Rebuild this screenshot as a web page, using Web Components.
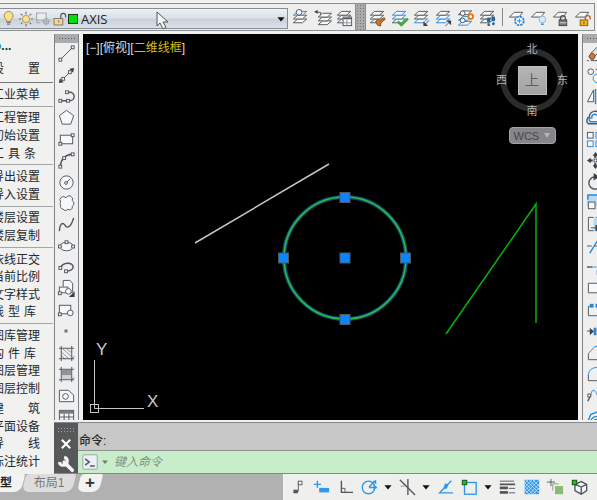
<!DOCTYPE html>
<html lang="zh-CN">
<head>
<meta charset="utf-8">
<title>CAD 工作区</title>
<style>
html, body { height: 100%; margin: 0; }
body { font: 12px/16px "Liberation Sans", "Noto Sans CJK SC", sans-serif; color: #26282b; overflow: hidden; }
</style>
</head>
<body>
<cad-app></cad-app>
<script>
const sq = (x, y, c = 'k') => `<rect class="${c} w" x="${x - 1.5}" y="${y - 1.5}" width="3" height="3"/>`;
const sheet = (y, c, x = 0) => `<path class="${c} w" d="M${2.5 + x} ${y + 4}l4.5-4h9.5l-4.5 4z"/>`;
const stack = (a, b, c) => sheet(10.5, c) + sheet(6.5, b) + sheet(2.5, a);
const lone = `<path class="k w" d="M1.5 8.500l5-5h9l-4 5z"/>`;

const ICONS = {
  // draw tools
  line: `<path class="k" d="M3 17L17 3"/>${sq(3.5, 16.500)}${sq(16.5, 3.5)}`,
  xline: `<path class="k" d="M3 17L17 3"/><path class="fk" d="M18 2l-5 1 4 4zM2 18l1-5 4 4z"/>${sq(6.5, 13.5)}${sq(13.5, 6.5)}`,
  pline: `<path class="k2" d="M3.500 14.5h8M10 5.500h3.500a4.500 4.500 0 0 1 0 9h-2"/>${sq(3.5, 14.5)}${sq(11.5, 14.5)}${sq(10.5, 5.5)}`,
  polygon: `<path class="k w" d="M10 2.500l7.500 5.500-3 9h-9l-3-9z"/>`,
  rect: `<rect class="k w" x="3.500" y="5.500" width="13" height="9"/>${sq(16.5, 5.5)}${sq(3.5, 14.5)}`,
  arc: `<path class="k2" d="M3.500 16.500C4 9 8 4 16.500 3.500"/>${sq(3.5, 16.5)}${sq(7.5, 7.5)}${sq(16.5, 3.5)}`,
  circle: `<circle class="k w" cx="10" cy="10" r="7"/><path class="k" d="M10 10l4-4"/><circle class="k w" cx="9.500" cy="10.500" r="1.500"/>`,
  cloud: `<path class="k w" d="M4 8.500a3.200 3.200 0 1 1 5.500-4.500 3.500 3.500 0 1 1 6.500 3 3.500 3.500 0 0 1 0 6 2.800 2.800 0 0 1-4.500 3 3 3 0 0 1-5 0 3 3 0 0 1-2.500-4.500 1.800 1.800 0 0 1 0-3z"/>`,
  spline: `<path class="k2" d="M2.500 17C3 9 6 7 8.500 11S15 12 17.500 3"/>`,
  ellipse: `<ellipse class="k w" cx="10" cy="10" rx="7" ry="4.500"/>${sq(10, 5.5)}${sq(3, 10)}${sq(17, 10)}`,
  earc: `<path class="k2" d="M3.500 10.500C6 4 17 4 17 9.500c0 3-4 4.500-7.500 4.500"/>${sq(3.5, 10.5)}${sq(9.5, 14)}`,
  insert: `<path class="k w" d="M6.500 8V1.500h7l3 3V14h-4"/><rect class="k w" x="2.500" y="8.500" width="9" height="6"/>${sq(3, 15)}<circle class="k w" cx="12" cy="13" r="3"/><path class="fk" d="M18.500 13v6h-6z"/>`,
  block: `<rect class="k w" x="2.500" y="4.500" width="12" height="9"/><circle class="k w" cx="14" cy="12.500" r="3"/>${sq(3, 14)}`,
  point: `<rect class="k w" x="8.500" y="8.500" width="2" height="2"/>`,
  hatch: `<path class="g" d="M4 8l9 8M4 12l5 4M6 5l9 8M10 5l5 4"/><path class="k" d="M4.500 2v16M15.500 2v16M2 4.500h16M2 15.500h16M15 16l3-3"/>`,
  gradient: `<rect x="5" y="5" width="10" height="6" fill="#8e9499"/><rect x="5" y="11" width="10" height="4" fill="#cfd2d4"/><path class="k" d="M4.500 2v16M15.500 2v16M2 4.500h16M2 15.500h16M15 16l3-3"/>`,
  region: `<path class="k w" d="M2.500 16.500v-12h9.500l5.500 5v7z"/><circle class="k w" cx="9" cy="11" r="3"/>`,
  table: `<rect class="k w" x="2.500" y="2.500" width="15" height="14"/><path fill="#777d83" d="M3 3h14v3H3z"/><path class="k" d="M3 9.500h14M3 13h14M7.500 6v10M12.500 6v10"/>`,
  // modify tools
  erase: `<path fill="#d07a35" stroke="#6b3b18" d="M3 13l3-4 4 3-2 4H5z"/><path fill="#e6e2dc" stroke="#555" d="M6 9l6-6 5 3-7 6z"/><path class="k" d="M1 17.500h2M5 17.500h9"/>`,
  copy: `<circle class="k w" cx="5" cy="6" r="3"/><path class="k" d="M10 3.500h5"/><circle class="b w" cx="12" cy="13" r="4.500"/>`,
  mirror: `<path class="k w" d="M1.500 15.500L8 3v12.500z"/><path class="b2" d="M10 2v16"/><path class="b" d="M12.500 3v12.500H19z"/>`,
  offset: `<path class="k2 w" d="M2.500 16.500a4 4 0 0 1 1-7C4 2 13 2 15 7v9.500z"/><path class="b2 w" d="M5 14.500a2 2 0 0 1 1-4c0-5 5-5 7-1v5z"/>`,
  array: `<rect class="k w" x="1.500" y="2.500" width="6" height="6"/><g class="b w"><rect x="10.500" y="2.500" width="6" height="6"/><rect x="1.500" y="11.500" width="6" height="6"/><rect x="10.500" y="11.500" width="6" height="6"/></g>`,
  move: `<path class="fk" d="M10 1l3 4h-2v2H8.500V5H7zM10 19l3-4h-2v-2H8.500v2H7zM1 10l4-3v2h2v2H5v2zM19 10l-4-3v2h-2v2h2v2z"/><rect class="k w" x="8.500" y="8.500" width="3" height="3"/>`,
  rotate: `<path class="k2" d="M13 16A6.500 6.500 0 1 1 9 4"/><path class="fk" d="M8 0l6 4-6 4z"/>`,
  scale: `<rect x="1" y="1" width="17" height="12" fill="#b5dbf5"/><path class="b2" d="M2 6V1h15"/><rect class="k w" x="2.500" y="8.500" width="7" height="7"/>`,
  stretch: `<rect x="8" y="3" width="9" height="14" fill="#b5dbf5"/><path class="k" d="M8 2.500H2.500v14H8"/><path class="b" d="M10 2.500h7v14h-7" stroke-dasharray="3 2"/><path class="k" d="M5 13.500h6"/><path class="fk" d="M10 10l5 3.500-5 3.500z"/>`,
  trim: `<path class="k" d="M1 9.500h5M9 9.500h3"/><path class="b2" d="M4 17l8-13"/><path class="k" d="M15 9.500h3"/>`,
  extend: `<path class="k2" d="M1 9.500h6"/><path class="b" d="M8 9.500h8" stroke-dasharray="3 1"/><path class="b2" d="M12 13v5"/>`,
  breakpoint: `<path class="k w" d="M17 4.500H2.500v10H17"/>`,
  breakgap: `<path class="k" d="M4 5.500H2.500v10H17v-10h-2"/><rect fill="#2a86da" x="4" y="3" width="4" height="4"/><rect fill="#2a86da" x="10" y="3" width="4" height="4"/>`,
  join: `<path class="k" d="M1 9.500h8"/><path class="fk" d="M4 6l4 4-4 4z"/><path fill="#2a86da" d="M8 6h3v8H8zM12 10l4-4v8z"/>`,
  chamfer: `<path class="k" d="M2.500 10v6.500H18"/><path class="b" d="M2.500 10l7-7.500H18"/>`,
  fillet: `<path class="k" d="M2.500 10v6.500H18"/><path class="b" d="M2.500 11c0-6 5-8.500 9-8.500H18"/>`,
  blend: `<path class="k2" d="M2 16l3-7"/><path class="b" d="M5 9c2-8 5-4 7 1s5 4 6 1"/>${sq(3.5, 10)}`,
  explode: `<g class="b2 w"><path d="M2 14l3-7 7-3 6 3v8H6z"/><path d="M5 15c0-5 4-7 11-6M8 15c0-3 3-4 8-3"/></g>`,
  // layer tools
  layprop: stack('b', 'k', 'k') + `<circle class="k w" cx="8.500" cy="3.500" r="3"/>`,
  layprev: `<path class="fk" d="M1 3l4-2v4z"/><path class="k" d="M4 3.500h4v3"/><g transform="translate(3 2)">${stack('k', 'k', 'k')}</g>`,
  laystate: stack('k', 'k', 'k') + `<rect class="k w" x="8.500" y="8.500" width="9" height="9"/><path class="k2" d="M9 10h8"/><path class="g" d="M9 14.500h8M12.500 11v6"/>`,
  laymatch: stack('k', 'k', 'k') + `<path fill="#c97628" stroke="#8a4c18" d="M8 13l3-2 2 1 4-3 1 2-4 3-1 4-3-1z"/>`,
  laycurrent: stack('b', 'b', 'k') + `<path d="M8 13l4 4 7-7" fill="none" stroke="#36ad2c" stroke-width="2.500"/>`,
  layiso: stack('k', 'k', 'b') + `<path class="k" d="M18 12l-4 4"/><path class="fk" d="M12 18v-5l5 5z"/>`,
  layuniso: stack('k', 'b', 'b') + `<path class="k" d="M12 18l4-4"/><path class="fk" d="M18 12h-5l5 5z"/>`,
  layfreeze: sheet(13, 'b') + sheet(8, 'b') + sheet(2, 'k') + `<circle class="k w" cx="7" cy="4.500" r="2.500"/><circle class="k w" cx="7" cy="12" r="2.500"/><circle cx="15.500" cy="8" r="2.500" fill="#fff" stroke="#e97a1b" stroke-width="2"/>`,
  laywalk: stack('k', 'k', 'k') + `<g fill="#24649f"><rect x="9.500" y="9" width="3.500" height="5" rx="1.500"/><rect x="10" y="15" width="2.500" height="3" rx="1"/><rect x="14.500" y="8" width="3.500" height="5" rx="1.500"/><rect x="15" y="14" width="2.500" height="3" rx="1"/></g>`,
  frz: lone + `<circle cx="12" cy="12.500" r="4.500" fill="#fff" stroke="#2a86da" stroke-width="2" stroke-dasharray="2.500 1"/><path class="b" d="M12 10v5M9.500 12.500h5"/>`,
  off: lone + `<circle cx="13" cy="11" r="3.500" fill="#d6ebfa" stroke="#8fb8d8"/><path class="b2" d="M11.500 16h3"/>`,
  lock: lone + `<path class="k2" d="M9 12V9.500a2.500 2.500 0 0 1 5 0V12"/><rect x="7.500" y="11.500" width="8" height="6" fill="#777" stroke="#444"/><path stroke="#ddd" d="M8 14.500h7"/>`,
  unlock: lone + `<path d="M12 12V9.500a2.500 2.500 0 0 1 5 0V11" fill="none" stroke="#b0672c" stroke-width="1.500"/><rect x="6.500" y="11.500" width="8" height="6" fill="#f3b51f" stroke="#8d5817"/><path class="k" d="M10.500 13v3"/>`,
  // layer state
  bulb: `<path fill="#fbe28a" stroke="#8d7a45" d="M7 13c0-3-3-3.500-3-7a5.500 5.500 0 0 1 11 0c0 3.500-3 4-3 7z"/><path class="k" d="M7 14.500h5M7.500 16.500h4"/>`,
  sun: `<g stroke="#77746a" stroke-width="1.500"><path d="M10 1v3M10 16v3M1 10h3M16 10h3M3.500 3.500l2 2M14.500 14.500l2 2M3.500 16.500l2-2M14.500 5.500l2-2"/></g><circle cx="10" cy="10" r="4.500" fill="#fbe08a" stroke="#a08b50"/>`,
  vpfreeze: `<g fill="#ececec" stroke="#a9adb1" stroke-width="1.500"><path d="M2 2.500h12v9H2zM6 14.500H2.500v-3"/><circle cx="14" cy="13" r="3" stroke-width="2"/><path d="M14 8v10M9 13h10"/></g>`,
  open: `<path class="k2" d="M11 10V6a3 3 0 0 1 6 0v2"/><rect x="2.500" y="9.500" width="11" height="8" fill="#f4d795" stroke="#6f6552"/><path class="k" d="M8.500 11.500v3"/>`,
  // status toggles
  infer: `<path class="k" d="M11.500 4v11"/><rect class="k w" x="11.500" y="3.500" width="4" height="4"/><rect fill="#555" x="6" y="13" width="5" height="4"/>`,
  dyn: `<path class="c2" d="M6 3v8M2 7h8"/><rect x="8" y="11" width="11" height="5" fill="#2f97ea"/>`,
  ortho: `<path class="k2" d="M6 3v13h13"/><path class="k" d="M6 11.500h4v4"/>`,
  polar: `<circle class="c2" cx="9.500" cy="10.500" r="7"/><path class="c2" d="M10 10l6-6M10 10.500h9"/><path fill="#2f97ea" d="M18 2v5l-4-3zM15 7v6l4-2.500z"/>`,
  iso: `<path class="k2" d="M2 2l17 17"/><path class="k2" d="M11 1v18"/><path class="g" d="M3 9h5"/>`,
  otrack: `<path class="c2" d="M17 3L4 16.500h15"/><path fill="#2f97ea" d="M10 6l4 1-2 5-4 0z"/>`,
  osnap: `<rect class="c2" x="5" y="5" width="13" height="13"/><rect x="2.500" y="2.500" width="5" height="5" fill="#12c51a" stroke="#124b12"/>`,
  weight: `<path stroke="#555" d="M2 3.500h16"/><path stroke="#555" stroke-width="2" d="M2 7h9M11 7h8"/><path stroke="#555" stroke-width="3" d="M2 11h9"/><path stroke="#555" stroke-width="3" d="M2 16h9"/><path class="k" d="M12 11.500h7M12 16.500h7"/>`,
  transp: `<rect x="3" y="2" width="16" height="16" fill="#2f97ea"/><path d="M3 6L7 2M3 10l8-8M3 14l12-12M4 17L19 2M8 18l11-11M12 18l7-7M3 13l5 5M3 9l9 9M3 5l13 13M4 2l15 15M8 2l11 11M12 2l7 7" stroke="#d5ebfb" stroke-width=".8"/>`,
  cycle: `<path class="g" d="M7.500 14V6.500H14"/><path class="k" d="M5.500 1v8M1 4.500h9"/><rect x="10" y="9" width="9" height="9" fill="#8fb873"/>`,
  osnap3d: `<g class="k2 w"><path d="M5.500 7l7-3 6 3v7l-6 4-7-4zM5.500 7l7 3 6-3M12.500 10v8"/></g><rect x="2.500" y="2.500" width="5" height="5" fill="#12c51a" stroke="#124b12"/>`,
  caret: `<path fill="#111" d="M4 7h12l-6 7z"/>`,
  // command line
  close: `<path d="M4 4l12 12M16 4L4 16" stroke="#fff" stroke-width="3"/>`,
  wrench: `<path d="M8 8l9 9" stroke="#f4f4f4" stroke-width="4" stroke-linecap="round"/><path d="M8 2.500A4.500 4.500 0 1 1 2.500 8" fill="none" stroke="#f4f4f4" stroke-width="3.500"/>`,
  prompt: `<rect x="1" y="1" width="18" height="18" rx="1" fill="#edf1f5" stroke="#8c97a0"/><path d="M4 6l5 4-5 4M10 15h6" stroke="#4d5b68" stroke-width="2" fill="none"/>`
};

class Base extends HTMLElement {
  constructor() {
    super();
    this.attachShadow({ mode: 'open' });
  }
  connectedCallback() {
    this.shadowRoot.innerHTML = this.view();
  }
}

customElements.define('cad-icon', class extends Base {
  view() {
    return `<style>
      :host { display: block; width: var(--icon, 20px); height: var(--icon, 20px); }
      svg { display: block; width: 100%; height: 100%; fill: none; }
      .k, .k2 { stroke: #50565c; } .b, .b2 { stroke: #2a86da; } .c, .c2 { stroke: #2f97ea; } .g { stroke: #8f9499; }
      .k2, .b2, .c2 { stroke-width: 1.5; } .w { fill: #f7f8f9; } .fk { fill: #3c4146; }
    </style><svg viewBox="0 0 20 20" aria-hidden="true">${ICONS[this.getAttribute('name')]}</svg>`;
  }
});

customElements.define('tool-button', class extends Base {
  view() {
    return `<style>
      :host { display: flex; }
      button { all: unset; box-sizing: border-box; flex: 1; min-width: 0; display: flex; align-items: center; justify-content: center; cursor: default; }
      cad-icon { flex: none; }
    </style><button type="button" aria-label="${this.getAttribute('label')}"><cad-icon name="${this.getAttribute('name')}"></cad-icon></button>`;
  }
});
const tools = s => s.trim().split(/\s+/).map(p => {
  const [n, l] = p.split(':');
  return `<tool-button name="${n}" label="${l}"${n === 'caret' ? ' class="caret"' : ''}></tool-button>`;
}).join('');

customElements.define('layer-bar', class extends Base {
  view() {
    return `<style>
      :host { display: flex; align-items: stretch; height: 26px; border: 1px solid #8c8e90; border-left: 0; margin: 3px 2px 3px 0; background: #eeeeed; --icon: 19px; }
      .combo { flex: 1; min-width: 0; box-sizing: border-box; margin: 4px 1px 1px 0; border: 1px solid #878d94; border-left: 0; display: flex; align-items: center; background: linear-gradient(#eef0f3, #dde2e8 45%, #c9d1da 55%, #dbe1e8); }
      .combo tool-button { width: 17px; --icon: 16px; }
      i { width: 8px; height: 8px; border: 1px solid #173d17; background: #00e010; margin: 0 3px 0 0; }
      select { appearance: none; flex: 1; min-width: 0; border: 0; padding: 0; margin: 0; background: none; color: #1e2124; font: 13px/18px "Open Sans", "Liberation Sans", sans-serif; }
      .combo cad-icon { --icon: 12px; }
      .tool { display: flex; padding-top: 2px; } .tool tool-button { width: 22px; }
      .grip { width: 9px; border: solid #8c8e90; border-width: 0 1px; background: radial-gradient(circle, #777 1px, transparent 1px) 0 0 / 3px 3px, #aaa; }
      .rule { width: 8px; background: linear-gradient(#888, #888) center / 1px 18px no-repeat; }
    </style>
    <div class="combo">${tools('bulb:开关图层 sun:冻结图层 vpfreeze:视口冻结 open:锁定图层')}<i></i>
      <select aria-label="图层"><option>AXIS</option></select><cad-icon name="caret"></cad-icon></div>
    <div class="tool">${tools('layprop:图层特性 layprev:上一个图层 laystate:图层状态')}</div>
    <div class="grip"></div>
    <div class="tool">${tools('laymatch:图层匹配 laycurrent:置为当前 layiso:图层隔离 layuniso:取消隔离 layfreeze:视口冻结 laywalk:图层漫游')}</div>
    <div class="rule"></div>
    <div class="tool">${tools('frz:冻结 off:关闭 lock:锁定 unlock:解锁')}</div>`;
  }
});

customElements.define('side-menu', class extends Base {
  view() {
    const groups = ['工业菜单', '工程管理,初始设置,工 具 条', '导出设置,导入设置', '楼层设置,楼层复制', '依线正交,当前比例,文字样式,线 型 库', '图库管理,构 件 库,图层管理,图层控制', '建　　筑,平面设备,导　　线,标注统计'];
    const row = t => `<button type="button">${t.replace(/ /g, '<s></s>')}</button>`;
    return `<style>
      :host { display: flex; flex-direction: column; box-sizing: border-box; padding: 3px 0; margin-left: -8px; }
      button { all: unset; flex: 1 1 0; display: flex; align-items: center; white-space: pre; line-height: 16px; }
      s { width: 4px; }
      .title { flex: 0 0 18px; font-weight: bold; padding-left: 2px; } .title span { color: #2a86da; }
      .head { flex: 0 0 20px; margin: 4px 0 1px; }
      hr { flex: 0 0 1px; border: 0; margin: 2px 1px 3px 0; background: #a4a6a8; } hr.strong { background: #777; }
      hr.gap { background: none; margin: 1px 0; }
    </style>
    <button type="button" class="title"><span>o</span>...</button><button type="button" class="head">设　　置</button><hr class="strong">
    ${groups.map(g => g.split(',').map(row).join('')).reduce((a, g, i) => a + `<hr${i === 6 ? ' class="gap"' : ''}>` + g)}`;
  }
});

customElements.define('tool-strip', class extends Base {
  view() {
    return `<style>
      :host { display: flex; flex-direction: column; box-sizing: border-box; border: solid #7e8185; border-width: 0 1px; background: #eeefee; overflow: hidden; --icon: 19px; }
      .grip { flex: 0 0 9px; background: radial-gradient(circle, #55585b 1px, transparent 1px) 3px 3px / 3px 3px, #a9abad; background-clip: content-box, border-box; padding: 2px 3px; box-sizing: border-box; }
      .list { flex: 1 1 0; min-height: 0; display: flex; flex-direction: column; margin-bottom: -8px; }
      ::slotted(tool-button) { flex: 1 1 0; min-height: 0; }
    </style><div class="grip"></div><div class="list"><slot></slot></div>`;
  }
});

customElements.define('view-cube', class extends Base {
  view() {
    return `<style>
      :host { display: grid; justify-items: center; gap: 9px; font-size: 11px; line-height: 14px; color: #b4b4b4; }
      .compass { display: grid; grid-template: 18px 40px 18px / 16px 40px 16px; place-items: center; background: radial-gradient(circle at center, transparent 25px, #2b2b2b 26px 31px, transparent 32px); }
      button { all: unset; } .n { grid-area: 1/2; align-self: start; } .w { grid-area: 2/1; justify-self: start; } .e { grid-area: 2/3; justify-self: end; } .s { grid-area: 3/2; align-self: end; }
      .top { grid-area: 2/2; box-sizing: border-box; width: 29px; height: 29px; background: linear-gradient(#b5b5b5, #a2a2a2); border: 1px solid #bdbdbd; color: #5f5f5f; text-align: center; line-height: 27px; font-size: 14px; }
      .wcs { box-sizing: border-box; width: 47px; height: 17px; border: 1px solid #a4a4a8; border-radius: 4px; background: #85858a; color: #48484c; display: flex; align-items: center; justify-content: space-between; padding: 0 5px 0 4px; }
      .wcs b { border: solid transparent; border-width: 5px 3px 0; border-top-color: #b4b4ba; }
    </style>
    <div class="compass"><button class="n">北</button><button class="w">西</button><button class="top">上</button><button class="e">东</button><button class="s">南</button></div>
    <button class="wcs">WCS<b></b></button>`;
  }
});

customElements.define('drawing-canvas', class extends Base {
  view() {
    const grip = (x, y) => `<rect x="${x - 5}" y="${y - 5}" width="10" height="10" fill="#0a84ff" stroke="#4c5964"/>`;
    return `<style>
      :host { display: block; position: relative; overflow: hidden; background: #000; color: #dcdcdc; }
      svg { position: absolute; inset: 0; width: 100%; height: 100%; fill: none; }
      text { fill: #c9c9c9; font: 17px "Liberation Sans", sans-serif; }
      .label { position: absolute; left: 3px; top: 6px; }
      .label button { all: unset; } .label .style { color: #d2bd14; }
      view-cube { position: absolute; right: 10px; top: 8px; }
      .axes { inset: auto auto 0 0; width: 90px; height: 86px; }
    </style>
    <svg role="img" aria-label="图形">
      <path stroke="#c4c4c4" stroke-width="1.500" d="M112 209L246 130"/>
      <path stroke="#00b50c" stroke-width="1.500" d="M363 300L453 170V289"/>
      <circle cx="262" cy="224" r="61" stroke="#174a78" stroke-width="4"/><circle cx="262" cy="224" r="61" stroke="#22c535" stroke-width="1.500"/>
      ${grip(262, 163.5)}${grip(200.5, 224)}${grip(262, 224)}${grip(322.5, 224)}${grip(262, 285.5)}
    </svg>
    <svg class="axes"><path stroke="#c4c4c4" d="M11.500 26V74.500H61"/><rect x="7.500" y="70.500" width="8" height="8" stroke="#c4c4c4"/><text x="13" y="21">Y</text><text x="64" y="73">X</text></svg>
    <div class="label"><button>[−]</button><button>[俯视]</button><button>[<span class="style">二维线框</span>]</button></div>
    <view-cube></view-cube>`;
  }
});

customElements.define('command-panel', class extends Base {
  view() {
    return `<style>
      :host { display: grid; grid-template-columns: 24px 1fr; border: solid #85888a; border-width: 1px 0; background: #c7c7c7; }
      .side { background: #57585a; display: grid; grid-template-rows: 10px 21px 1fr; --icon: 14px; }
      .grip { margin: 4px 3px 0; background: radial-gradient(circle, #a2a4a6 1px, transparent 1px) 0 0 / 3px 3px; }
      .side .tune { --icon: 18px; }
      .log { height: 28px; box-sizing: border-box; padding: 9px 1px 0; font-weight: 500; line-height: 18px; border-bottom: 1px solid #8e9390; }
      .entry { height: 22px; background: #c8edcb; display: flex; align-items: center; --icon: 16px; }
      .entry tool-button { margin-left: 4px; } .entry .caret { --icon: 10px; opacity: .5; margin: 0 4px 0 2px; width: 10px; }
      input { all: unset; flex: 1; min-width: 0; font-style: italic; line-height: 20px; } input::placeholder { color: #7f8f82; opacity: 1; }
    </style>
    <div class="side"><div class="grip"></div><tool-button name="close" label="关闭"></tool-button><tool-button class="tune" name="wrench" label="自定义"></tool-button></div>
    <div><div class="log">命令:</div><div class="entry">${tools('prompt:最近命令 caret:展开')}<input aria-label="命令" placeholder="键入命令"></div></div>`;
  }
});

customElements.define('layout-tabs', class extends Base {
  view() {
    return `<style>
      :host { display: flex; align-items: start; }
      button { all: unset; box-sizing: border-box; height: 18px; position: relative; z-index: 0; text-align: center; color: #777; line-height: 18px; }
      button::before { content: ""; position: absolute; z-index: -1; inset: 0; background: #dcdddc; border-radius: 4px 2px 7px 7px; transform: skewX(-14deg); }
      .on { width: 36px; margin-left: -13px; font-weight: bold; color: #222; padding-right: 10px; }
      .on::before, .add::before { background: #f3f3f2; }
      .sheet { width: 50px; margin-left: 1px; } .add { width: 22px; margin-left: 5px; color: #333; font-weight: bold; font-size: 17px; }
    </style><button class="on">模型</button><button class="sheet">布局1</button><button class="add" aria-label="新建布局">+</button>`;
  }
});

customElements.define('status-bar', class extends Base {
  view() {
    return `<style>
      :host { display: flex; padding: 0 6px 0 2px; background: #efefee; --icon: 18px; }
      tool-button { width: 24px; } .caret { width: 14px; --icon: 12px; }
    </style>${tools('infer:推断约束 dyn:动态输入 ortho:正交 polar:极轴追踪 caret:极轴选项 iso:等轴测 caret:等轴测选项 otrack:对象捕捉追踪 osnap:对象捕捉 caret:捕捉选项 weight:线宽 transp:透明度 cycle:选择循环 osnap3d:三维捕捉')}`;
  }
});

customElements.define('cad-app', class extends Base {
  view() {
    return `<style>
      :host { display: grid; height: 100%; grid-template-columns: 54px minmax(0, 1fr); grid-template-rows: auto minmax(0, 1fr) auto 26px; background: #f1f1f0; position: relative; }
      layer-bar { grid-column: 1 / 3; }
      side-menu { grid-row: 2 / 4; grid-column: 1; }
      .work { display: grid; grid-template-columns: 25px minmax(0, 1fr) 15px; column-gap: 4px; min-height: 0; margin-bottom: 2px; }
      .clip { overflow: hidden; display: grid; } .clip tool-strip { width: 26px; }
      .foot { grid-column: 1 / 3; display: flex; justify-content: space-between; background: #b1b1b1; }
      .pointer { position: absolute; left: 156px; top: 11px; width: 13px; height: 19px; }
    </style>
    <layer-bar></layer-bar>
    <side-menu></side-menu>
    <div class="work">
      <tool-strip>${tools('line:直线 xline:构造线 pline:多段线 polygon:多边形 rect:矩形 arc:圆弧 circle:圆 cloud:修订云线 spline:样条曲线 ellipse:椭圆 earc:椭圆弧 insert:插入块 block:创建块 point:点 hatch:图案填充 gradient:渐变色 region:面域 table:表格')}</tool-strip>
      <drawing-canvas></drawing-canvas>
      <div class="clip"><tool-strip>${tools('erase:删除 copy:复制 mirror:镜像 offset:偏移 array:阵列 move:移动 rotate:旋转 scale:缩放 stretch:拉伸 trim:修剪 extend:延伸 breakpoint:打断于点 breakgap:打断 join:合并 chamfer:倒角 fillet:圆角 blend:光顺曲线 explode:分解')}</tool-strip></div>
    </div>
    <command-panel></command-panel>
    <div class="foot"><layout-tabs></layout-tabs><status-bar></status-bar></div>
    <svg class="pointer" viewBox="0 0 13 19" aria-hidden="true"><path fill="#f4f6f8" stroke="#50565c" d="M1 1v14l3-3 3 6 3-1.500-3-5.500h5z"/></svg>`;
  }
});
</script>
</body>
</html>
